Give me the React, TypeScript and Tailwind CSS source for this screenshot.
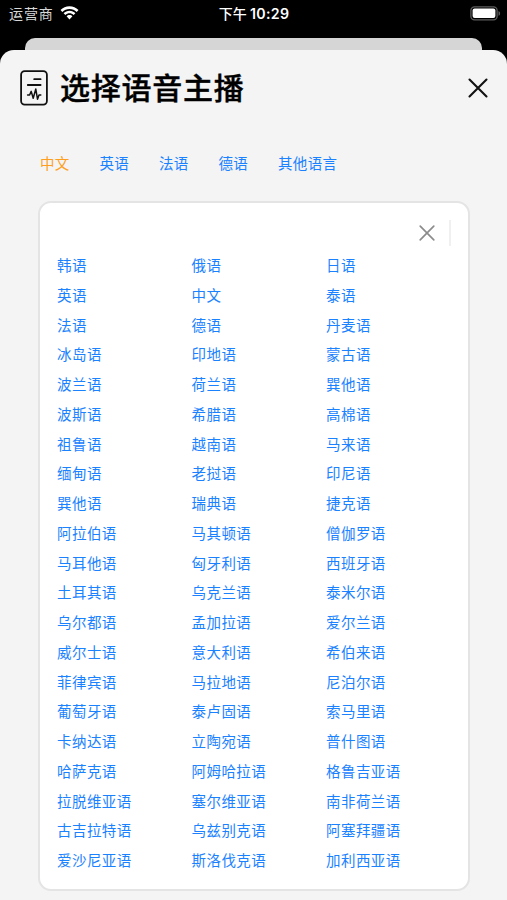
import React, { useState } from "react";

const tabs = ["中文", "英语", "法语", "德语", "其他语言"];

const languages = [
  "韩语", "俄语", "日语",
  "英语", "中文", "泰语",
  "法语", "德语", "丹麦语",
  "冰岛语", "印地语", "蒙古语",
  "波兰语", "荷兰语", "巽他语",
  "波斯语", "希腊语", "高棉语",
  "祖鲁语", "越南语", "马来语",
  "缅甸语", "老挝语", "印尼语",
  "巽他语", "瑞典语", "捷克语",
  "阿拉伯语", "马其顿语", "僧伽罗语",
  "马耳他语", "匈牙利语", "西班牙语",
  "土耳其语", "乌克兰语", "泰米尔语",
  "乌尔都语", "孟加拉语", "爱尔兰语",
  "威尔士语", "意大利语", "希伯来语",
  "菲律宾语", "马拉地语", "尼泊尔语",
  "葡萄牙语", "泰卢固语", "索马里语",
  "卡纳达语", "立陶宛语", "普什图语",
  "哈萨克语", "阿姆哈拉语", "格鲁吉亚语",
  "拉脱维亚语", "塞尔维亚语", "南非荷兰语",
  "古吉拉特语", "乌兹别克语", "阿塞拜疆语",
  "爱沙尼亚语", "斯洛伐克语", "加利西亚语",
];

function StatusBar() {
  return (
    <div className="grid h-[38px] grid-cols-[1fr_auto_1fr] items-start pt-[3px] pl-[9px] pr-[6px] text-[14px] leading-[20px]">
      <div className="flex items-center gap-[6px] text-[#d8d8d8]">
        <span className="tracking-[0.9px]">运营商</span>
        <svg className="h-[14px] w-[19px]" viewBox="0 0 19 14" fill="#fff">
          <path d="M9.5 0.3C13 0.3 16.2 1.7 18.5 4L16.7 5.9C14.8 4 12.3 2.9 9.5 2.9S4.2 4 2.3 5.9L0.5 4C2.8 1.7 6 0.3 9.5 0.3Z" />
          <path d="M9.5 4.7C11.8 4.7 13.9 5.6 15.4 7.2L13.6 9C12.5 7.9 11.1 7.3 9.5 7.3S6.5 7.9 5.4 9L3.6 7.2C5.1 5.6 7.2 4.7 9.5 4.7Z" />
          <path d="M9.5 9C10.7 9 11.7 9.5 12.4 10.3L9.5 13.4L6.6 10.3C7.3 9.5 8.3 9 9.5 9Z" />
        </svg>
      </div>
      <div className="mr-[2px] flex items-center gap-[3px] font-medium text-white">
        <span className="pb-px tracking-[0.2px]">下午</span>
        <span className="font-['Inter',sans-serif] text-[14.2px] font-semibold tracking-[0.3px]">10:29</span>
      </div>
      <div className="flex justify-end pt-[3px]">
        <svg className="h-[15px] w-[31px]" viewBox="0 0 31 15" fill="none">
          <rect x="0.9" y="0.8" width="26.2" height="13" rx="3.6" stroke="#5c5c5c" strokeWidth="1.3" />
          <rect x="2.6" y="2.5" width="22.8" height="9.6" rx="2" fill="#fff" />
          <path d="M28.5 5V9.8C29.5 9.4 30.1 8.5 30.1 7.4S29.5 5.4 28.5 5Z" fill="#5c5c5c" />
        </svg>
      </div>
    </div>
  );
}

function VoiceIcon() {
  return (
    <svg
      className="h-[36px] w-[28px]"
      viewBox="0 0 28 36"
      fill="none"
      stroke="#111"
      strokeWidth="1.8"
      strokeLinecap="round"
      strokeLinejoin="round"
    >
      <rect x="1.1" y="1.1" width="25.8" height="33.6" rx="3.6" />
      <path d="M14.2 9.2H20.6M7.8 15H20.6" />
      <path d="M7.6 25H9.6L11.2 21.4L13.2 28.2L15.8 19L17.5 29.2L19 25H20.8" strokeWidth="1.5" />
    </svg>
  );
}

function CloseIcon({ className }: { className: string }) {
  return (
    <svg className={className} viewBox="0 0 20 20" fill="none" stroke="currentColor" strokeLinecap="round">
      <path d="M1.5 1.5L18.5 18.5M18.5 1.5L1.5 18.5" strokeWidth="2.1" />
    </svg>
  );
}

function App() {
  const [activeTab, setActiveTab] = useState("中文");

  return (
    <div className="h-[900px] w-[507px] overflow-hidden bg-black font-['Noto_Sans_CJK_SC',sans-serif]">
      <StatusBar />
      <div className="mx-auto h-[12px] w-[457px] rounded-t-[10px] bg-[#d6d6d6]" />
      <div className="h-[850px] rounded-t-[14px] bg-[#f4f4f4]">
        <div className="flex h-[76px] items-center pl-[20px] pr-[19px]">
          <VoiceIcon />
          <h1 className="mb-[4px] ml-[12px] text-[30px] leading-[40px] font-medium tracking-[0.75px] text-black [-webkit-text-stroke:0.4px_#000]">
            选择语音主播
          </h1>
          <button className="ml-auto text-[#111]">
            <CloseIcon className="h-[20px] w-[20px]" />
          </button>
        </div>

        <div className="flex gap-[29.8px] pt-[26px] pl-[40px]">
          {tabs.map((tab) => (
            <button
              key={tab}
              onClick={() => setActiveTab(tab)}
              className={
                tab === activeTab
                  ? "text-[14.5px] leading-[22px] tracking-[0.35px] text-[#ff9f1f]"
                  : "text-[14.5px] leading-[22px] tracking-[0.35px] text-[#1a82ff]"
              }
            >
              {tab}
            </button>
          ))}
        </div>

        <div className="mt-[27px] ml-[38px] h-[690px] w-[432px] rounded-[13px] border-2 border-[#e4e4e4] bg-white">
          <div className="flex h-[47px] items-end justify-end pr-[17px]">
            <CloseIcon className="mb-[9px] h-[16px] w-[16px] text-[#8c8c8c]" />
            <div className="mb-[4px] ml-[14px] h-[26px] w-[2px] bg-[#f0f0f0]" />
          </div>
          <div className="grid grid-cols-[134.5px_134.5px_1fr] pl-[17px]">
            {languages.map((name, index) => (
              <button
                key={index}
                className="h-[29.75px] text-left text-[14.5px] leading-[29.75px] tracking-[0.45px] whitespace-nowrap text-[#1a82ff]"
              >
                {name}
              </button>
            ))}
          </div>
        </div>
      </div>
    </div>
  );
}

export default App;
